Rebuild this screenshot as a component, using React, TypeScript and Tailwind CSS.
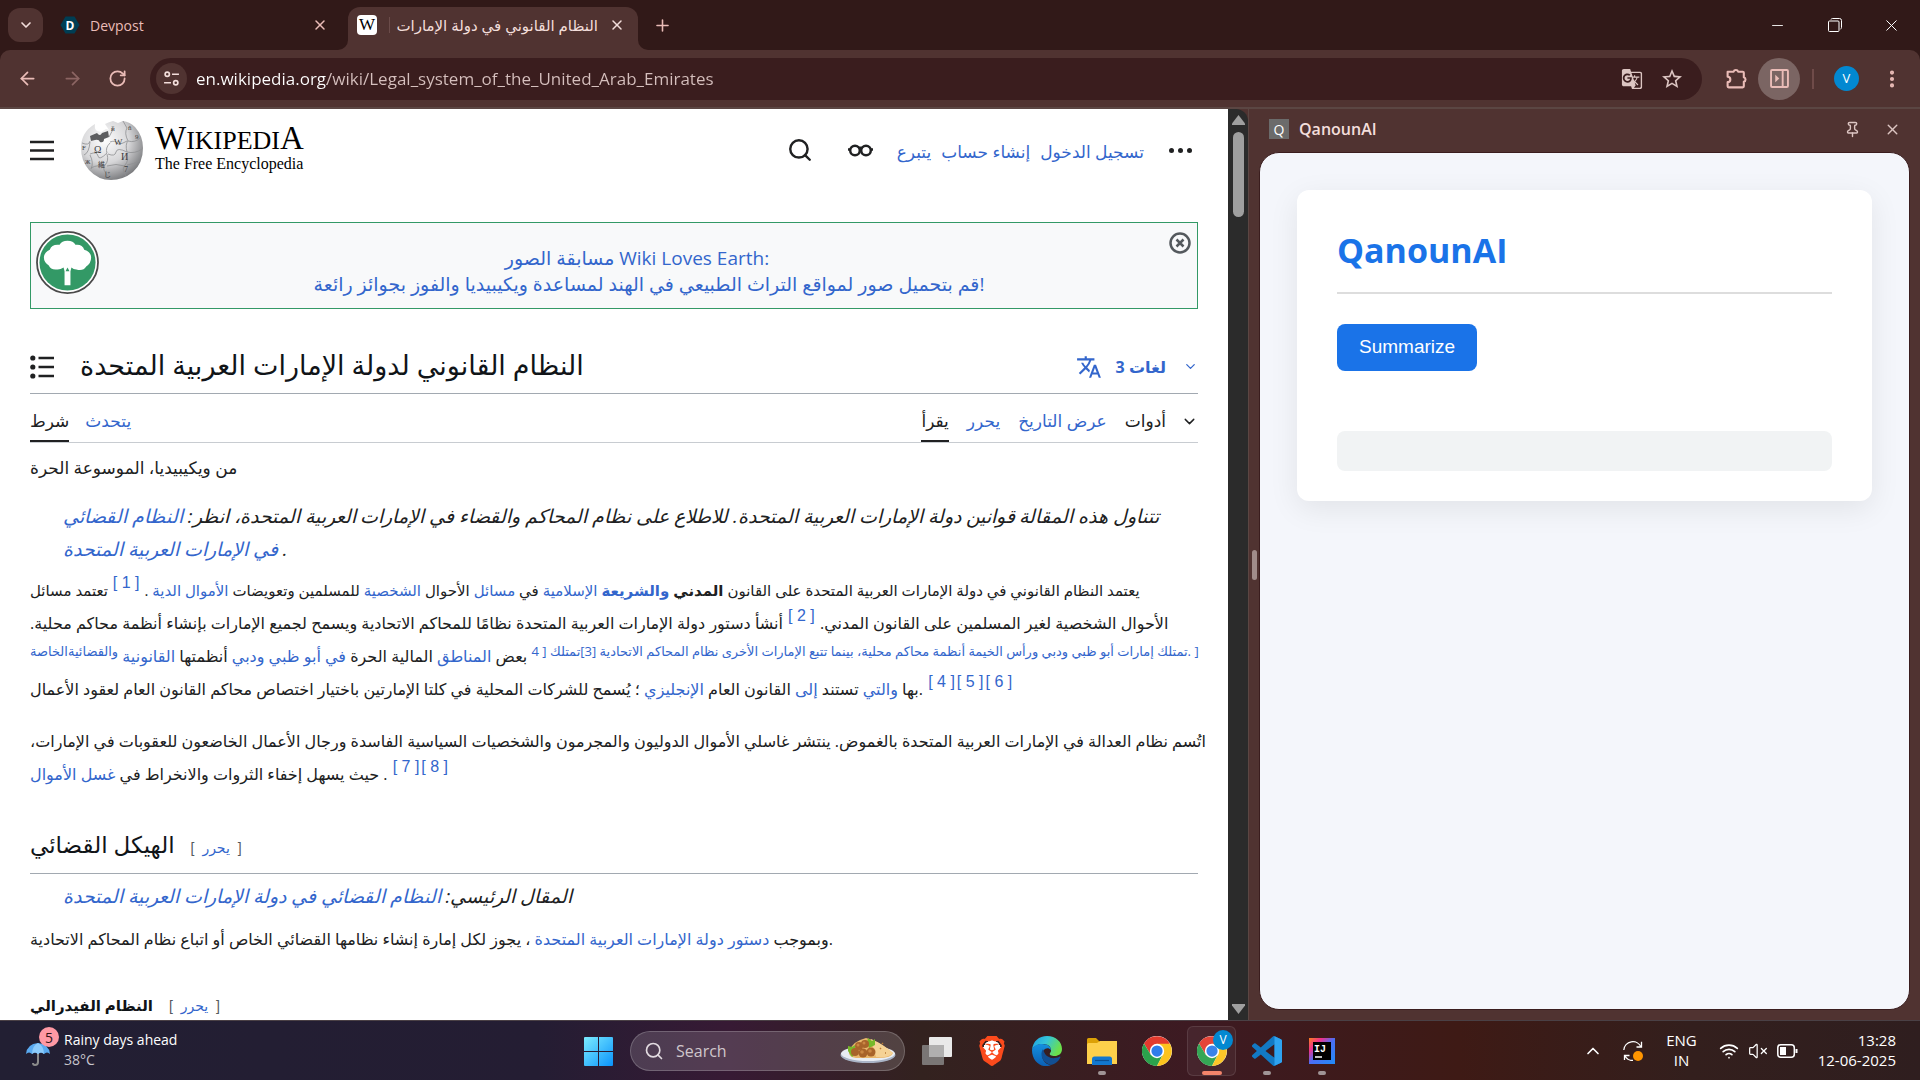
import React from 'react';
import {
  ArrowLeft,
  ArrowRight,
  ChevronDown,
  ChevronUp,
  Minus,
  MoreVertical,
  Pin,
  Plus,
  RotateCw,
  Search,
  VolumeX,
  Wifi,
  X,
} from 'lucide-react';
import { MdGTranslate, MdStarBorder, MdTranslate } from 'react-icons/md';
import { SiBrave } from 'react-icons/si';

/* ---------- Browser chrome ---------- */

function TabStrip() {
  return (
    <div className="flex h-[50px] items-end justify-between">
      <div className="flex items-end">
        <button aria-label="Search tabs" className="mb-2 ml-2 flex h-[34px] w-[35px] items-center justify-center rounded-xl bg-[#503331] text-[#f3dedb]">
          <ChevronDown size={16} strokeWidth={2.5} />
        </button>
        <div className="flex h-[50px] w-[295px] items-center pl-[17px] pr-[6px]">
          <svg viewBox="0 0 20 20" className="size-5">
            <path d="M5.5 1.5h9L19.500 10l-5 8.500h-9L.5 10z" fill="#003e54" />
            <text x="10" y="14.500" textAnchor="middle" fontSize="12" fontWeight="700" fill="#fff" fontFamily="Open Sans">D</text>
          </svg>
          <span className="ml-[10px] flex-1 text-[14px] text-[#eabcb7]">Devpost</span>
          <button aria-label="Close Devpost" className="flex size-6 items-center justify-center text-[#eabcb7]">
            <X size={16} strokeWidth={2.25} />
          </button>
        </div>
        <span className="size-[10px] bg-[#503331]">
          <span className="block size-[10px] rounded-br-[10px] bg-[#311918]" />
        </span>
        <div className="flex h-[43px] w-[290px] items-center rounded-t-xl bg-[#503331] pb-[8px] pl-[9px] pr-[9px]">
          <span className="flex size-5 items-center justify-center rounded bg-white font-['Liberation_Serif',serif] text-[17px] text-black">W</span>
          <span className="ml-3 h-4 w-px bg-[#6b4c4a]" />
          <span dir="rtl" className="ml-[6px] w-[202px] overflow-hidden text-[15px] leading-[24px] whitespace-nowrap text-[#f3dedb]">
            النظام القانوني في دولة الإمارات
          </span>
          <button aria-label="Close tab" className="ml-auto flex size-6 items-center justify-center text-[#f3dedb]">
            <X size={16} strokeWidth={2.25} />
          </button>
        </div>
        <span className="size-[10px] bg-[#503331]">
          <span className="block size-[10px] rounded-bl-[10px] bg-[#311918]" />
        </span>
        <button aria-label="New tab" className="flex h-[50px] w-7 items-center justify-center text-[#eabcb7]">
          <Plus size={19} strokeWidth={2} />
        </button>
      </div>
      <div className="flex h-[50px] text-white">
        <button aria-label="Minimize" className="flex w-[57px] items-center justify-center">
          <Minus size={17} strokeWidth={1.25} />
        </button>
        <button aria-label="Restore" className="flex w-[57px] items-center justify-center">
          <svg viewBox="0 0 14 14" className="size-[14px]" fill="none" stroke="currentColor">
            <rect x=".5" y="3" width="10.500" height="10.500" rx="1" />
            <path d="M3 1.500Q3.300.5 4.500.5H11.500Q13.500.5 13.500 2.500V9.500Q13.500 10.700 12.500 11" />
          </svg>
        </button>
        <button aria-label="Close window" className="flex w-[57px] items-center justify-center">
          <X size={19} strokeWidth={1.25} />
        </button>
      </div>
    </div>
  );
}

function Toolbar() {
  return (
    <div className="flex h-[59px] items-center rounded-t-[10px] border-b-2 border-[#5b4643] bg-[#503331] text-[#eabcb7]">
      <button aria-label="Back" className="ml-[6px] flex size-[42px] items-center justify-center">
        <ArrowLeft size={21} />
      </button>
      <button aria-label="Forward" className="ml-[3px] flex size-[42px] items-center justify-center text-[#8c6563]">
        <ArrowRight size={21} />
      </button>
      <button aria-label="Reload" className="ml-[3px] flex size-[42px] items-center justify-center">
        <RotateCw size={19} strokeWidth={2.25} />
      </button>
      <div className="ml-[12px] flex h-[42px] flex-1 items-center rounded-full bg-[#3a1d1e] pl-[6px] pr-[10px] text-[#dcc5c2]">
        <button aria-label="Site information" className="flex size-[31px] items-center justify-center rounded-full bg-[#503331]">
          <svg viewBox="0 0 16 16" className="size-[17px]" fill="none" stroke="#f3dedb" strokeWidth="1.600">
            <circle cx="4" cy="4" r="2" />
            <path d="M8.500 4H15M1 12h6.500" />
            <circle cx="12" cy="12" r="2" />
          </svg>
        </button>
        <input
          aria-label="Address"
          readOnly
          value="en.wikipedia.org/wiki/Legal_system_of_the_United_Arab_Emirates"
          className="ml-[9px] flex-1 bg-linear-to-r from-white from-[131px] to-[#d6c0be] to-[131px] bg-clip-text text-[17px] text-transparent outline-none"
        />
        <button aria-label="Translate this page" className="flex size-[40px] items-center justify-center">
          <MdGTranslate size={22} />
        </button>
        <button aria-label="Bookmark" className="flex size-[40px] items-center justify-center">
          <MdStarBorder size={24} />
        </button>
      </div>
      <button aria-label="Extensions" className="ml-[13px] flex size-[42px] items-center justify-center">
        <svg viewBox="0 0 22 22" className="size-[23px]" fill="none" stroke="currentColor" strokeWidth="2">
          <path d="M2.500 4.500H8.200a2.300 2.300 0 0 1 4.400 0H17a1 1 0 0 1 1 1V9.700a2.300 2.300 0 0 1 0 4.400V18.500a1 1 0 0 1-1 1H3.500a1 1 0 0 1-1-1V14.500a2.600 2.600 0 0 0 0-5.200z" strokeLinejoin="round" />
        </svg>
      </button>
      <button aria-label="Side panel" className="ml-px flex size-[42px] items-center justify-center rounded-full bg-[#7b6563]">
        <svg viewBox="0 0 18 18" className="size-[19px]" fill="none" stroke="currentColor" strokeWidth="1.800">
          <rect x="1" y="1" width="16" height="16" rx="1" />
          <path d="M12 1v16" />
          <path d="M5 5.500v7L8.800 9z" fill="currentColor" stroke="none" />
        </svg>
      </button>
      <span className="ml-[12px] h-5 w-[2px] bg-[#6f4b49]" />
      <button aria-label="Profile" className="ml-[20px] flex size-[25px] items-center justify-center rounded-full bg-[#0288d1] text-[13px] text-white">
        V
      </button>
      <button aria-label="Menu" className="mr-[7px] ml-[12px] flex size-[42px] items-center justify-center">
        <MoreVertical size={22} strokeWidth={2.5} />
      </button>
    </div>
  );
}

/* ---------- Wikipedia ---------- */

function Globe() {
  return (
    <svg viewBox="0 0 64 60" className="h-[60px] w-[64px]" aria-label="Wikipedia globe">
      <defs>
        <radialGradient id="globe" cx="38%" cy="32%" r="72%">
          <stop offset="0" stopColor="#fff" />
          <stop offset=".55" stopColor="#d6d6d8" />
          <stop offset="1" stopColor="#77787b" />
        </radialGradient>
      </defs>
      <path
        d="M15 4Q14 9 17 11L21 12 26 9 29 10 25 4Q29 2 33 1L38 3 43 1Q50 2 55 7Q63 16 63 28Q63 43 53 52Q43 60 31 60Q18 60 9 50Q1 41 1 28Q1 12 15 4Z"
        fill="url(#globe)"
      />
      <path d="M10 16L17 13Q20 17 22 13L28 11 29 17 24 19Q24 23 20 22Q19 19 15 20L11 21Z" fill="#5d5e60" />
      <g fill="none" stroke="#8e8f92" strokeWidth=".8">
        <path d="M2 23Q9 26 10 21M10 22Q9 33 4 35M10 34Q17 31 18 36T27 33Q25 28 30 23M27 34Q29 41 25 45T29 57M10 35Q14 43 11 49M28 34Q35 37 36 32T47 32Q45 24 48 21M47 33Q49 41 45 45T46 56M48 21Q55 23 60 18M48 21Q44 13 47 8L43 1M30 22Q36 20 37 23T47 21M11 48Q18 44 25 47M27 46Q36 43 45 46M47 45Q54 44 59 41M47 32Q55 34 62 29M29 17Q33 11 33 6" />
      </g>
      <g fill="#3c3c3e" fontFamily="Liberation Serif, Noto Sans CJK JP, serif" fontSize="10">
        <text x="14" y="33">Ω</text>
        <text x="34" y="25" fontSize="9">W</text>
        <text x="41" y="40">И</text>
        <text x="18" y="47" fontSize="7">維</text>
        <text x="44" y="52" fontSize="8">7</text>
        <text x="31" y="11" fontSize="7">й</text>
        <text x="48" y="10" fontSize="7">ñ</text>
        <text x="55" y="19" fontSize="7">9</text>
        <text x="2" y="30" fontSize="7">F</text>
        <text x="24" y="57" fontSize="7">じ</text>
        <text x="5" y="44" fontSize="6">Ж</text>
      </g>
    </svg>
  );
}

function WikiHeader() {
  return (
    <header className="flex h-[72px] items-center">
      <button aria-label="Main menu">
        <svg viewBox="0 0 24 21" className="h-[21px] w-6" stroke="#202122" strokeWidth="2.500">
          <path d="M0 2h24M0 10.500h24M0 19h24" />
        </svg>
      </button>
      <a href="#main-page" className="ml-[26px] flex items-center">
        <Globe />
        <span className="ml-[11px] flex flex-col pb-[4px] font-['Liberation_Serif',serif] text-black">
          <span className="text-[33px] leading-[28px]">
            W<span className="text-[26px]">IKIPEDI</span>A
          </span>
          <span className="text-[16px] leading-[18px]">The Free Encyclopedia</span>
        </span>
      </a>
      <button aria-label="Search" className="ml-auto text-[#202122]">
        <Search size={26} strokeWidth={2.25} />
      </button>
      <button aria-label="Appearance" className="ml-[35px]">
        <svg viewBox="0 0 25 14" className="h-[14px] w-[25px]" fill="none" stroke="#202122" strokeWidth="2.500">
          <circle cx="7" cy="7.500" r="4.800" />
          <circle cx="18" cy="7.500" r="4.800" />
          <path d="M10.500 5.500q2-1.500 4 0M3 6.500H0M22 6.500h3" />
        </svg>
      </button>
      <nav dir="rtl" className="ml-[24px] flex gap-[10px] pt-1 text-[17px] whitespace-nowrap text-[#3366cc]">
        <a href="#login">تسجيل الدخول</a>
        <a href="#create">إنشاء حساب</a>
        <a href="#donate">يتبرع</a>
      </nav>
      <button aria-label="More" className="ml-[25px] mr-[6px] flex gap-1">
        <span className="size-[5px] rounded-full bg-[#202122]" />
        <span className="size-[5px] rounded-full bg-[#202122]" />
        <span className="size-[5px] rounded-full bg-[#202122]" />
      </button>
    </header>
  );
}

function Banner() {
  return (
    <div className="mt-[36px] flex h-[87px] items-start justify-between border border-[#339966] bg-[#f8f9fa] px-[5px]">
      <svg viewBox="0 0 64 64" className="mt-[8px] size-[63px]" aria-label="Wiki Loves Earth">
        <circle cx="32" cy="32" r="31" fill="#fff" stroke="#4a4a4a" strokeWidth="1.800" />
        <circle cx="32" cy="32" r="28.500" fill="#339966" />
        <path d="M32 10q6 0 8 4q7-1 9 5q7 2 7 8t-5 9q-3 5-10 3q-3 0-5-2L35 41V55H29V41L28 37q-3 2-6 2q-7 1-9-4q-5-3-5-8t6-8q2-6 10-5q2-4 8-4z" fill="#fff" />
        <path d="M32 37l2 4h-4z" fill="#339966" />
      </svg>
      <a href="#wle" className="mt-[22px] pl-[30px] text-center text-[19px] leading-[26px] whitespace-nowrap text-[#3366cc]">
        <span className="block pr-6">مسابقة الصور Wiki Loves Earth:</span>
        <span className="block">قم بتحميل صور لمواقع التراث الطبيعي في الهند لمساعدة ويكيبيديا والفوز بجوائز رائعة!</span>
      </a>
      <button aria-label="Dismiss" className="mt-[9px] mr-[1px]">
        <svg viewBox="0 0 22 22" className="size-[22px]" fill="none" stroke="#54595d" strokeWidth="2.500">
          <circle cx="11" cy="11" r="9.500" />
          <path d="M7.500 7.500l7 7M14.500 7.500l-7 7" />
        </svg>
      </button>
    </div>
  );
}

type LineProps = {
  dir?: 'ltr' | 'rtl';
  className?: string;
  children: React.ReactNode;
};

function Line({ dir = 'ltr', className = '', children }: LineProps) {
  return (
    <span dir={dir} className={`block h-[33px] w-fit leading-[33px] whitespace-nowrap ${className}`}>
      {children}
    </span>
  );
}

function Link({ children }: { children: React.ReactNode }) {
  return <a href="#article" className="text-[#3366cc]">{children}</a>;
}

function Ref({ n }: { n: number }) {
  return (
    <sup dir="ltr" className="mx-px font-['Liberation_Sans',sans-serif] text-[16px] text-[#3366cc]">
      <a href="#cite">[ {n} ]</a>
    </sup>
  );
}

function EditLink() {
  return (
    <span dir="ltr" className="ml-4 font-['Liberation_Sans','DejaVu_Sans',sans-serif] text-[14px] font-normal text-[#54595d]">
      [ <a href="#edit" className="mx-1 text-[#3366cc]">يحرر</a> ]
    </span>
  );
}

function PageTabs() {
  return (
    <div className="flex h-[49px] items-end justify-between border-b border-[#c8ccd1] text-[17px] text-[#202122]">
      <nav className="flex gap-4">
        <a href="#article" className="h-[38px] border-b-2 border-[#202122] leading-[34px]">شرط</a>
        <a href="#talk" className="h-[38px] leading-[34px] text-[#3366cc]">يتحدث</a>
      </nav>
      <nav className="flex gap-[18px]">
        <a href="#read" className="h-[38px] border-b-2 border-[#202122] leading-[34px]">يقرأ</a>
        <a href="#edit" className="h-[38px] leading-[34px] text-[#3366cc]">يحرر</a>
        <a href="#history" className="h-[38px] leading-[34px] text-[#3366cc]">عرض التاريخ</a>
        <button className="flex h-[38px] items-center pb-[4px]">
          أدوات
          <ChevronDown size={17} className="ml-[15px]" />
        </button>
      </nav>
    </div>
  );
}

function Article() {
  return (
    <main className="min-w-0 flex-1 overflow-hidden bg-white px-[30px] pt-[5px] text-[#202122]">
      <WikiHeader />
      <Banner />
      <div className="mt-[33px] flex h-[52px] items-center border-b border-[#a2a9b1] pb-[2px]">
        <button aria-label="Contents">
          <svg viewBox="0 0 24 24" className="size-6" stroke="#202122" strokeWidth="2.600" fill="#202122">
            <path d="M8.500 3H24M8.500 12H24M8.500 21H24" />
            <g stroke="none">
              <circle cx="2.800" cy="3" r="2.600" />
              <circle cx="2.800" cy="12" r="2.600" />
              <circle cx="2.800" cy="21" r="2.600" />
            </g>
          </svg>
        </button>
        <h1 className="ml-[26px] pb-[4px] text-[27px] leading-[40px] whitespace-nowrap text-[#101418]">
          النظام القانوني لدولة الإمارات العربية المتحدة
        </h1>
        <button className="ml-auto flex items-center text-[16px] font-bold text-[#3366cc]">
          <MdTranslate size={26} className="mr-[14px]" />
          3 لغات
          <ChevronDown size={15} className="ml-[17px]" />
        </button>
      </div>
      <PageTabs />

      <p className="mt-[8px] text-[17px]">
        <Line>من ويكيبيديا، الموسوعة الحرة</Line>
      </p>

      <p className="mt-[16px] pl-[33px] text-[19px] italic">
        <Line dir="rtl">
          تتناول هذه المقالة قوانين دولة الإمارات العربية المتحدة. للاطلاع على نظام المحاكم والقضاء في الإمارات العربية المتحدة، انظر: <Link>النظام القضائي</Link>
        </Line>
        <Line><Link>في الإمارات العربية المتحدة</Link> .</Line>
      </p>

      <p className="mt-[8px] text-[16px]">
        <Line dir="rtl" className="text-[15px]">
          يعتمد النظام القانوني في دولة الإمارات العربية المتحدة على القانون <b>المدني</b> <b><Link>والشريعة</Link></b> <Link>الإسلامية</Link> في <Link>مسائل</Link> الأحوال <Link>الشخصية</Link> للمسلمين وتعويضات <Link>الأموال الدية</Link> . <Ref n={1} /> تعتمد مسائل
        </Line>
        <Line dir="rtl">
          الأحوال الشخصية لغير المسلمين على القانون المدني. <Ref n={2} /> أنشأ دستور دولة الإمارات العربية المتحدة نظامًا للمحاكم الاتحادية ويسمح لجميع الإمارات بإنشاء أنظمة محاكم محلية.
        </Line>
        <Line dir="rtl">
          <sup className="text-[13px]">
            <Link>[ .تمتلك إمارات أبو ظبي ودبي ورأس الخيمة أنظمة محاكم محلية، بينما تتبع الإمارات الأخرى نظام المحاكم الاتحادية [3]تمتلك [ 4</Link>
          </sup>{' '}
          بعض <Link>المناطق</Link> المالية الحرة <Link>في أبو ظبي ودبي</Link> أنظمتها <Link>القانونية</Link>{' '}
          <sup className="text-[13px]"><Link>والقضائيةالخاصة</Link></sup>
        </Line>
        <Line>
          بها <Link>والتي</Link> تستند <Link>إلى</Link> القانون العام <Link>الإنجليزي</Link> ؛ يُسمح للشركات المحلية في كلتا الإمارتين باختيار اختصاص محاكم القانون العام لعقود الأعمال. <Ref n={4} /><Ref n={5} /><Ref n={6} />
        </Line>
      </p>

      <p className="mt-[19px] text-[16px]">
        <Line dir="rtl">
          اتُسم نظام العدالة في الإمارات العربية المتحدة بالغموض. ينتشر غاسلي الأموال الدوليون والمجرمون والشخصيات السياسية الفاسدة ورجال الأعمال الخاضعون للعقوبات في الإمارات،
        </Line>
        <Line>
          حيث يسهل إخفاء الثروات والانخراط في <Link>غسل الأموال</Link> . <Ref n={7} /><Ref n={8} />
        </Line>
      </p>

      <h2 className="mt-[30px] h-[53px] border-b border-[#a2a9b1] text-[23px] leading-[46px] whitespace-nowrap text-[#101418]">
        الهيكل القضائي
        <EditLink />
      </h2>
      <p className="mt-[6px] pl-[33px] text-[19px] italic">
        <Line dir="rtl">المقال الرئيسي: <Link>النظام القضائي في دولة الإمارات العربية المتحدة</Link></Line>
      </p>
      <p className="mt-[10px] text-[16px]">
        <Line>وبموجب <Link>دستور دولة الإمارات العربية المتحدة</Link> ، يجوز لكل إمارة إنشاء نظامها القضائي الخاص أو اتباع نظام المحاكم الاتحادية.</Line>
      </p>
      <h3 className="mt-[28px] text-[15px] leading-[42px] font-bold whitespace-nowrap text-[#101418]">
        النظام الفيدرالي
        <EditLink />
      </h3>
    </main>
  );
}

function Scrollbar() {
  return (
    <div className="flex w-[20px] flex-col items-center justify-between rounded-tr-xl bg-[#2b2b2b] py-[6px]">
      <div className="flex flex-col items-center gap-[7px]">
        <svg viewBox="0 0 13 10" className="h-[10px] w-[13px]" fill="#9f9f9f"><path d="M6.500 0L13 8.500V10H0V8.500z" /></svg>
        <span className="h-[85px] w-[11px] rounded-full bg-[#9f9f9f]" />
      </div>
      <svg viewBox="0 0 13 10" className="h-[10px] w-[13px]" fill="#9f9f9f"><path d="M6.500 10L13 1.500V0H0V1.500z" /></svg>
    </div>
  );
}

/* ---------- Extension side panel ---------- */

function SidePanel() {
  return (
    <aside className="flex w-[35%] border-l border-[#5b4643] bg-[#503331] pb-[10px] pr-[10px]">
      <div className="flex w-[10px] items-center justify-center pt-[10px]">
        <span className="h-[30px] w-[5px] rounded-full bg-[#a08c8a]" />
      </div>
      <div className="flex flex-1 flex-col">
        <div className="flex h-[43px] items-center pb-[3px] pl-[10px] text-[#f3dedb]">
          <span className="flex size-5 items-center justify-center bg-[#6b6b6b] text-[14px] text-white">Q</span>
          <span className="ml-[10px] text-[16px] font-semibold">QanounAI</span>
          <button aria-label="Pin" className="ml-auto text-[#dcc5c2]"><Pin size={17} /></button>
          <button aria-label="Close panel" className="ml-[23px] mr-[9px] text-[#dcc5c2]"><X size={17} /></button>
        </div>
        <div className="flex-1 rounded-[20px] border border-[#3a1d1e] bg-[#f4f6fb] px-[37px] pt-[37px]">
          <div className="rounded-xl bg-white px-10 py-[30px] shadow-[0_8px_30px_rgba(0,0,0,0.08)]">
            <h1 className="h-[74px] border-b-2 border-[#dddddd] text-[34px] leading-[60px] font-bold text-[#1a73e8]">QanounAI</h1>
            <button className="mt-[30px] block h-[47px] rounded-lg bg-[#1a73e8] px-[22px] font-['Liberation_Sans',sans-serif] text-[19px] text-white">
              Summarize
            </button>
            <div className="mt-[60px] h-10 rounded-lg bg-[#f1f3f4]" />
          </div>
        </div>
      </div>
    </aside>
  );
}

/* ---------- Taskbar ---------- */

function ChromeIcon() {
  return (
    <svg viewBox="0 0 48 48" className="size-[30px]">
      <circle cx="24" cy="24" r="24" fill="#fff" />
      <path d="M24 13h20.800A24 24 0 0 0 3.200 12L13.700 29.500 24 24z" fill="#e33b2e" />
      <path d="M3.200 12A24 24 0 0 0 24 48L33.500 29.500 24 24 13.700 29.500z" fill="#2ba24c" />
      <path d="M24 48A24 24 0 0 0 44.800 12.500H24L33.500 29.500z" fill="#fcc31e" />
      <circle cx="24" cy="24" r="11.500" fill="#fff" />
      <circle cx="24" cy="24" r="9" fill="#2f7de9" />
    </svg>
  );
}

function EdgeIcon() {
  return (
    <svg viewBox="0 0 30 30" className="size-[30px]">
      <defs>
        <linearGradient id="edgeTop" x1="0" x2="1" y1="0" y2=".4">
          <stop offset="0" stopColor="#1b9de2" />
          <stop offset=".5" stopColor="#35c5d9" />
          <stop offset="1" stopColor="#6be04c" />
        </linearGradient>
        <linearGradient id="edgeLeft" x1="0" x2="0" y1="0" y2="1">
          <stop offset="0" stopColor="#1490df" />
          <stop offset="1" stopColor="#0b5fb4" />
        </linearGradient>
      </defs>
      <path d="M0 14C1 5 7 0 15 0c9 0 15 6 15 13 0 5-4 7-7 7-4 0-6-1-5-3 1-1 1-2 1-3 0-4-4-6-8-6C5 8 1 11 0 14z" fill="url(#edgeTop)" />
      <path d="M0 14c1-4 5-6 10-6 6 0 9 3 9 6-4-4-9 0-9 5 0 6 5 10 9 10-9 4-19-3-19-15z" fill="url(#edgeLeft)" />
      <path d="M11 13c-4 6 0 14 8 16 4-1 8-4 9-7 1-1 0-2-1-1-3 1-7 2-10 0-3-1-5-4-6-8z" fill="#124f93" />
    </svg>
  );
}

function FolderIcon() {
  return (
    <svg viewBox="0 0 30 27" className="h-[27px] w-[30px]">
      <path d="M0 1.500Q0 0 1.500 0H9l4 4H28.500Q30 4 30 6V10H0z" fill="#dca106" />
      <path d="M0 6.500Q0 5 1.500 5H10l3-2H30V26H0z" fill="#fdd04b" />
      <path d="M5 27V21q0-2.500 2.500-2.500h15Q25 18.500 25 21v6z" fill="#1277cf" />
      <path d="M8 22.500h14" stroke="#0a4f94" strokeWidth="1.200" />
    </svg>
  );
}

function FoodIcon() {
  return (
    <svg viewBox="0 0 56 28" className="h-[28px] w-[56px]">
      <ellipse cx="28" cy="18" rx="27.500" ry="8" fill="#a9b4c6" />
      <ellipse cx="28" cy="16.500" rx="27" ry="7.500" fill="#e8edf3" />
      <path d="M9 14Q13 4 26 1Q37 3 53 16Q52 21 38 21H16Q8 20 9 14z" fill="#e9b76c" />
      <path d="M31 2Q43 7 53 16Q50 21 36 20z" fill="#f5d295" />
      <path d="M28 1l4 3 3-2v6l-6 3-2-5zM8 9l4 1 3-2 1 8-4 4-4-6z" fill="#77b82a" />
      <g fill="#a8642a">
        <circle cx="19" cy="9" r="4" />
        <circle cx="25" cy="7" r="4" />
        <circle cx="15" cy="15" r="4" />
        <circle cx="23" cy="16" r="4.500" />
        <circle cx="31" cy="15" r="4.500" />
      </g>
      <g fill="#c98744">
        <circle cx="18" cy="8" r="1.500" />
        <circle cx="24" cy="6" r="1.500" />
        <circle cx="22" cy="15" r="1.800" />
        <circle cx="30" cy="14" r="1.800" />
      </g>
      <path d="M40 11l1 1M45 16l1 0M42 6l1 1" stroke="#b87b35" strokeWidth="1.500" />
    </svg>
  );
}

type TaskButtonProps = {
  label: string;
  running?: boolean;
  children: React.ReactNode;
};

function TaskButton({ label, running, children }: TaskButtonProps) {
  return (
    <button aria-label={label} className="relative flex h-[60px] w-[55px] items-center justify-center">
      {children}
      {running && <span className="absolute bottom-[6px] h-[4px] w-[8px] rounded-full bg-[#a09496]" />}
    </button>
  );
}

function Taskbar() {
  return (
    <footer className="grid h-[60px] grid-cols-[1fr_auto_1fr] border-t border-[#4a4045] bg-[linear-gradient(to_right,#221f33_0%,#241d33_28%,#371a34_38%,#33221f_48%,#3d1a22_62%,#3e1a15_76%,#331f1d_88%,#2f1e1f_100%)] text-white">
      <button className="flex items-center pl-[26px] text-left">
        <span className="relative block h-[32px] w-[26px]">
          <svg viewBox="0 0 26 26" className="mt-[6px] size-[26px]">
            <path d="M12 12v9q0 3-3 3-2 0-2-2" fill="none" stroke="#8b8b8b" strokeWidth="2" />
            <path d="M0 13Q1 3 12 2q11 1 12 11-3-3-6 0-3-3-6 0-3-3-6 0-3-3-6 0z" fill="#5aaaf0" />
            <path d="M6 13Q6 5 12 2 18 5 18 13q-3-3-6 0-3-3-6 0z" fill="#8ccbfb" />
          </svg>
          <span className="absolute -top-2 left-[13px] flex size-[20px] items-center justify-center rounded-full bg-[#ff99a4] text-[14px] text-[#321418]">5</span>
        </span>
        <span className="ml-[12px] flex flex-col pb-[2px] text-[14px] leading-[20px]">
          <span>Rainy days ahead</span>
          <span className="text-[#c9c6cd]">38°C</span>
        </span>
      </button>

      <div className="flex items-center">
        <TaskButton label="Start">
          <svg viewBox="0 0 29 29" className="size-[29px]">
            <defs>
              <linearGradient id="win" x1="0" x2="1" y1="0" y2="1">
                <stop offset="0" stopColor="#7cecff" />
                <stop offset="1" stopColor="#0a93fb" />
              </linearGradient>
            </defs>
            <path d="M0 1q0-1 1-1h13v14H0zM15 0h13q1 0 1 1v13H15zM0 15h14v14H1q-1 0-1-1zM15 15h14v13q0 1-1 1H15z" fill="url(#win)" />
          </svg>
        </TaskButton>
        <label className="mx-[4px] flex h-[40px] w-[275px] items-center rounded-full border border-white/20 bg-white/15 pl-[13px] pr-[8px]">
          <Search size={20} className="shrink-0 text-[#e2dbe0]" />
          <input type="search" aria-label="Search" placeholder="Search" className="ml-[12px] min-w-0 flex-1 bg-transparent text-[16px] outline-none placeholder:text-[#cfc6cb]" />
          <FoodIcon />
        </label>
        <TaskButton label="Task view">
          <svg viewBox="0 0 30 28" className="h-[28px] w-[30px]">
            <rect x="7" y="0" width="23" height="20" rx="1" fill="#e9e9e9" />
            <rect x="0" y="8" width="22" height="20" rx="1" fill="#7a7675" />
            <path d="M7 8H22V20H7z" fill="#b0afaf" />
          </svg>
        </TaskButton>
        <TaskButton label="Brave">
          <span className="flex h-[30px] w-[26px] items-center justify-center bg-[radial-gradient(closest-side,white_70%,transparent_72%)]">
            <SiBrave size={30} color="#fb4a1c" className="shrink-0" />
          </span>
        </TaskButton>
        <TaskButton label="Edge"><EdgeIcon /></TaskButton>
        <TaskButton label="File Explorer" running><FolderIcon /></TaskButton>
        <TaskButton label="Chrome"><ChromeIcon /></TaskButton>
        <div className="relative flex h-[50px] w-[55px] items-center justify-center">
          <span className="absolute inset-y-0 left-[3px] right-[3px] rounded-md border border-white/10 bg-white/5" />
          <button aria-label="Chrome, profile V"><ChromeIcon /></button>
          <span className="absolute top-[4px] left-[29px] flex size-[20px] items-center justify-center rounded-full bg-[#0288d1] text-[12px]">V</span>
          <span className="absolute bottom-px h-[4px] w-[20px] rounded-full bg-[#f4846b]" />
        </div>
        <TaskButton label="Visual Studio Code" running>
          <svg viewBox="0 0 24 24" className="size-[30px]" fill="#1279c4">
            <path d="M23.150 2.587L18.210.21a1.494 1.494 0 0 0-1.705.29l-9.460 8.630-4.120-3.128a.999.999 0 0 0-1.276.057L.327 7.261A1 1 0 0 0 .326 8.740L3.899 12 .326 15.260a1 1 0 0 0 .001 1.479L1.650 17.940a.999.999 0 0 0 1.276.057l4.120-3.128 9.460 8.630a1.492 1.492 0 0 0 1.704.290l4.942-2.377A1.500 1.500 0 0 0 24 20.060V3.939a1.500 1.500 0 0 0-.850-1.352zm-5.146 14.861L10.826 12l7.178-5.448v10.896z" />
            <path d="M18 .2L23.150 2.600Q24 3 24 3.900V20.100Q24 21 23.150 21.400L18 23.800z" fill="#2ea3f0" />
          </svg>
        </TaskButton>
        <TaskButton label="IntelliJ IDEA" running>
          <svg viewBox="0 0 26 26" className="size-[26px]">
            <defs>
              <linearGradient id="ij" x1="0" x2="1" y1="0" y2="1">
                <stop offset="0" stopColor="#fc801d" />
                <stop offset=".25" stopColor="#f0308c" />
                <stop offset=".5" stopColor="#4b6ef5" />
                <stop offset="1" stopColor="#1f8df8" />
              </linearGradient>
            </defs>
            <path d="M0 0h26v26H0z" fill="url(#ij)" />
            <path d="M4 4h18v18H4z" fill="#000" />
            <text x="5" y="14" fontSize="10" fontWeight="700" fill="#fff" fontFamily="Liberation Mono">IJ</text>
            <path d="M6 19h7" stroke="#fff" strokeWidth="1.500" />
          </svg>
        </TaskButton>
      </div>

      <div className="flex items-center justify-end pr-[24px]">
        <button aria-label="Show hidden icons"><ChevronUp size={20} /></button>
        <button aria-label="Updates" className="ml-[20px]">
          <svg viewBox="0 0 20 20" className="size-[20px]" fill="none" stroke="#fff" strokeWidth="1.300">
            <path d="M.8 9A9 9 0 0 1 18 6M18.500.8V6H13.500M1.500 19V14.500H6.500M2 15a9 9 0 0 0 8 4.500" />
            <circle cx="15" cy="15" r="5" fill="#ff9500" stroke="none" />
          </svg>
        </button>
        <button className="ml-[23px] flex flex-col pb-[2px] text-center text-[15px] leading-[20px]">
          <span>ENG</span>
          <span>IN</span>
        </button>
        <button aria-label="Network, volume and battery" className="ml-[22px] flex items-center gap-[9px]">
          <Wifi size={20} />
          <VolumeX size={20} strokeWidth={1.5} />
          <svg viewBox="0 0 21 14" className="h-[14px] w-[21px]" fill="none" stroke="#fff" strokeWidth="1.500">
            <rect x=".8" y=".8" width="16.500" height="12.400" rx="3" />
            <path d="M3 3h6v8H3z" fill="#fff" stroke="none" />
            <path d="M19.500 5v4" strokeWidth="2" />
          </svg>
        </button>
        <button className="ml-[20px] flex flex-col pb-[2px] text-right text-[15px] leading-[20px]">
          <span>13:28</span>
          <span>12-06-2025</span>
        </button>
      </div>
    </footer>
  );
}

export default function App() {
  return (
    <div className="flex h-screen flex-col overflow-hidden bg-[#311918] font-['Open_Sans','DejaVu_Sans',sans-serif]">
      <TabStrip />
      <Toolbar />
      <div className="flex min-h-0 flex-1 bg-[#503331]">
        <Article />
        <Scrollbar />
        <SidePanel />
      </div>
      <Taskbar />
    </div>
  );
}
